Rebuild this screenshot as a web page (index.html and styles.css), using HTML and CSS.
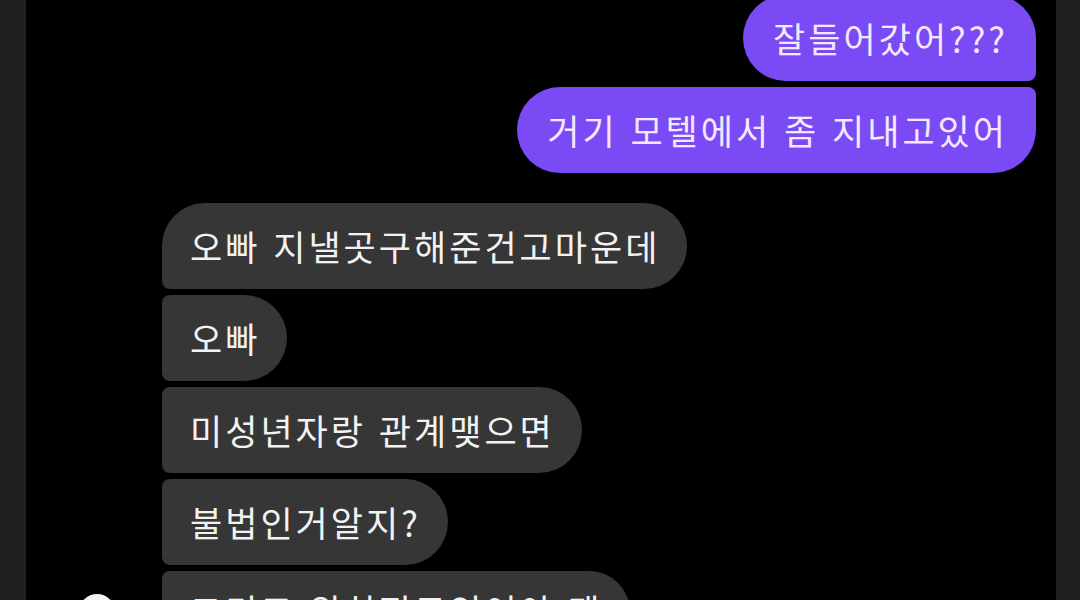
FILE: index.html
```html
<!DOCTYPE html>
<html lang="ko">
<head>
<meta charset="UTF-8">
<meta name="viewport" content="width=device-width, initial-scale=1.0">
<title>메시지</title>
<link rel="stylesheet" href="styles.css">
</head>
<body>

<div class="screen">
  <div class="edge"></div>

  <main class="chat">
    <div class="group sent">
      <div class="bubble first">잘들어갔어???</div>
      <div class="bubble last">거기 모텔에서 좀 지내고있어</div>
    </div>

    <div class="group received">
      <div class="bubble first">오빠 지낼곳구해준건고마운데</div>
      <div class="bubble">오빠</div>
      <div class="bubble">미성년자랑 관계맺으면</div>
      <div class="bubble">불법인거알지?</div>
      <span class="avatar"></span>
      <div class="bubble last">그리고 위치정도있어야 돼</div>
    </div>
  </main>

  <div class="edge"></div>
</div>

</body>
</html>
```

FILE: styles.css
```css
html, body {
  margin: 0;
  padding: 0;
  height: 100%;
  overflow: hidden;
  background: #000;
}
body {
  font-family: "Noto Sans CJK KR", "Noto Sans", sans-serif;
}
.screen {
  display: flex;
  height: 600px;
}
.edge {
  background: #202020;
}
.edge:first-child {
  width: 26px;
}
.edge:last-child {
  width: 24px;
}
.chat {
  flex: 1;
  display: flex;
  flex-direction: column;
  gap: 30px;
  overflow: hidden;
}

.bubble {
  font-size: 35px;
  line-height: 42px;
  letter-spacing: 3px;
  padding: 22px 27px 22px 28px;
  white-space: nowrap;
}

/* my messages */
.sent {
  display: flex;
  flex-direction: column;
  align-items: flex-end;
  gap: 6px;
  margin-top: -5px;
  padding-right: 20px;
}
.sent .bubble {
  background: #7a4bf5;
  color: #f4e8ff;
  padding: 22px 28px 22px 30px;
}
.sent .first {
  border-radius: 43px 43px 8px 43px;
}
.sent .last {
  border-radius: 43px 8px 43px 43px;
}

/* their messages */
.received {
  display: grid;
  grid-template-columns: 36px auto;
  column-gap: 47px;
  row-gap: 6px;
  justify-content: start;
  justify-items: start;
  align-items: center;
  padding-left: 53px;
}
.received .bubble {
  grid-column: 2;
  background: #363636;
  color: #f2f2f2;
  border-radius: 8px 43px 43px 8px;
}
.received .first {
  border-radius: 43px 43px 43px 8px;
}
.received .last {
  border-radius: 8px 43px 43px 43px;
  padding-top: 18px;
}
.avatar {
  grid-column: 1;
  width: 36px;
  height: 36px;
  border-radius: 50%;
  background: #f4f4f4;
}
```
